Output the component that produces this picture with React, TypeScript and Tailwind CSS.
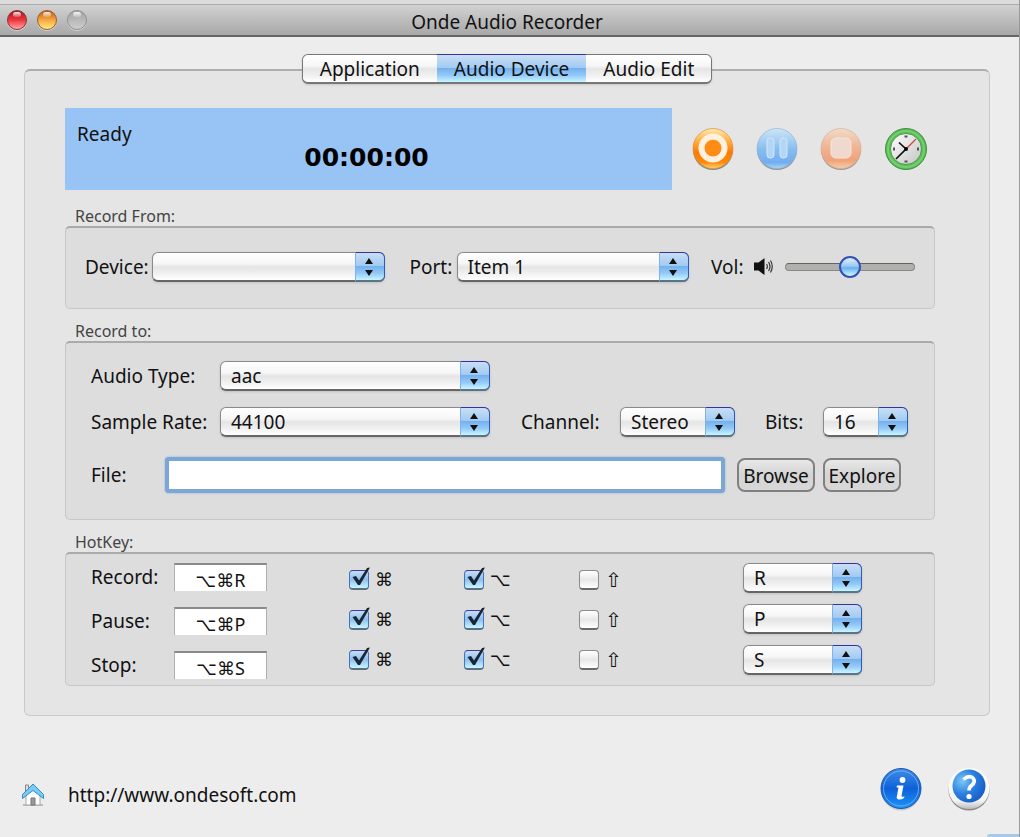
import { useState } from 'react';
import type { ReactNode } from 'react';
import clsx from 'clsx';

const AQUA =
  'bg-[linear-gradient(to_bottom,#c9def5_0%,#a3cbf3_46%,#74b1ee_50%,#93c9f8_75%,#c8f6ff_100%)]';
const GLOSS =
  'bg-[linear-gradient(to_bottom,#ffffff_0%,#f6f6f6_40%,#e5e5e5_52%,#f0f0f0_75%,#ffffff_100%)]';

const TABS = ['Application', 'Audio Device', 'Audio Edit'];

const HOTKEYS = [
  { name: 'Record', key: 'R' },
  { name: 'Pause', key: 'P' },
  { name: 'Stop', key: 'S' },
];

const MODIFIERS = [
  { name: 'Command', symbol: '⌘', on: true },
  { name: 'Option', symbol: '⌥', on: true },
  { name: 'Shift', symbol: '⇧', on: false },
];

type PopupProps = {
  id?: string;
  label?: string;
  options: string[];
  className?: string;
};

function Popup({ id, label, options, className }: PopupProps) {
  return (
    <div className={clsx('relative h-[30px]', className)}>
      <select
        id={id}
        aria-label={label}
        className={clsx(
          'h-full w-full appearance-none rounded-md border border-b-2 border-[#8a8a8a] border-b-[#666] pr-8 pl-[10px] text-[19px] leading-6 shadow-sm outline-none',
          GLOSS,
        )}
      >
        {options.map((option) => (
          <option key={option}>{option}</option>
        ))}
      </select>
      <span
        className={clsx(
          'pointer-events-none absolute inset-y-0 right-0 flex w-[30px] items-center justify-center rounded-r-md border border-b-2 border-t-[#3434a4] border-r-[#2c5cb4] border-b-[#5c7488] border-l-[#7fb2e6] pr-[2px]',
          AQUA,
        )}
      >
        <svg width="8" height="18" viewBox="0 0 8 18" aria-hidden="true">
          <path d="M4 0l4 6H0zM4 18l4-6H0z" fill="#111" />
        </svg>
      </span>
    </div>
  );
}

function Check({ label, symbol, on }: { label: string; symbol: string; on: boolean }) {
  return (
    <label className="flex h-5 items-center gap-[6px]">
      <span className="relative size-5">
        <input
          type="checkbox"
          defaultChecked={on}
          aria-label={label}
          className="peer block size-5 appearance-none rounded-sm border border-b-2 border-[#8c8c8c] border-b-[#6a6a6a] bg-[linear-gradient(to_bottom,#ffffff,#e8e8e8_50%,#ffffff)] checked:border-[#4672b8] checked:border-t-[#3c3ca8] checked:border-b-[#5a6f84] checked:bg-[linear-gradient(to_bottom,#c9def5,#8fc0f2_50%,#c8f6ff)]"
        />
        <svg
          className="pointer-events-none absolute -top-1 left-0 hidden peer-checked:block"
          width="22"
          height="22"
          viewBox="0 0 22 22"
          aria-hidden="true"
        >
          <path d="M3.500 11l3.500-1 3 4.500L18 2l3-.5L11 19H9z" fill="#1b2633" />
        </svg>
      </span>
      <span
        className={clsx(
          "font-['DejaVu_Sans',sans-serif] leading-5",
          symbol === '⇧' ? 'text-xl' : 'text-lg',
        )}
      >
        {symbol}
      </span>
    </label>
  );
}

function Group({ title, className, children }: { title: string; className?: string; children: ReactNode }) {
  return (
    <section>
      <h2 className="pl-[10px] text-base leading-5 text-[#444]">{title}</h2>
      <div
        className={clsx(
          'rounded-[5px] border border-t-2 border-[#c6c6c6] border-t-[#aaa] bg-[#ddd]',
          className,
        )}
      >
        {children}
      </div>
    </section>
  );
}

function Light({ label, className }: { label: string; className: string }) {
  return (
    <button
      aria-label={label}
      className={clsx(
        'flex size-5 justify-center rounded-full border pt-px shadow-[0_1px_0_#d8d8d8]',
        className,
      )}
    >
      <span className="h-[5px] w-2 rounded-full bg-linear-to-b from-white/90 to-white/20" />
    </button>
  );
}

function RecordIcon() {
  return (
    <svg viewBox="0 0 42 44" className="h-11 w-[42px]" aria-hidden="true">
      <defs>
        <linearGradient id="rec" x2="0" y2="1">
          <stop offset="0" stopColor="#ffe9b0" />
          <stop offset=".3" stopColor="#ffb347" />
          <stop offset=".6" stopColor="#ff7a00" />
          <stop offset=".85" stopColor="#ff8a0a" />
          <stop offset="1" stopColor="#ffd873" />
        </linearGradient>
      </defs>
      <circle cx="21" cy="23" r="20" fill="#000" opacity=".4" />
      <circle cx="21" cy="21.500" r="20" fill="url(#rec)" stroke="#d9903a" strokeWidth=".7" />
      <circle cx="21" cy="21" r="11.500" fill="none" stroke="#fff0df" strokeWidth="6" />
      <circle cx="21" cy="21" r="8" fill="#ff8c14" />
    </svg>
  );
}

function PauseIcon() {
  return (
    <svg viewBox="0 0 42 44" className="h-11 w-[42px]" aria-hidden="true">
      <defs>
        <linearGradient id="pause" x2="0" y2="1">
          <stop offset="0" stopColor="#cfe6f4" />
          <stop offset=".5" stopColor="#88bff0" />
          <stop offset=".85" stopColor="#72adf0" />
          <stop offset="1" stopColor="#a5dcf6" />
        </linearGradient>
      </defs>
      <circle cx="21" cy="23" r="20" fill="#000" opacity=".35" />
      <circle cx="21" cy="21.500" r="20" fill="url(#pause)" stroke="#92b4d4" strokeWidth=".7" />
      <rect x="11" y="11" width="7" height="20" rx="3" fill="#b4d6f6" stroke="#d3e6f8" />
      <rect x="24" y="11" width="7" height="20" rx="3" fill="#b4d6f6" stroke="#d3e6f8" />
    </svg>
  );
}

function StopIcon() {
  return (
    <svg viewBox="0 0 42 44" className="h-11 w-[42px]" aria-hidden="true">
      <defs>
        <linearGradient id="stop" x2="0" y2="1">
          <stop offset="0" stopColor="#f0dccb" />
          <stop offset=".45" stopColor="#f0b595" />
          <stop offset=".8" stopColor="#f0a27a" />
          <stop offset="1" stopColor="#f5cfa8" />
        </linearGradient>
      </defs>
      <circle cx="21" cy="23" r="20" fill="#000" opacity=".32" />
      <circle cx="21" cy="21.500" r="20" fill="url(#stop)" stroke="#d8b095" strokeWidth=".7" />
      <rect x="11" y="11" width="20" height="20" rx="5" fill="#efd8ce" stroke="#f6e6dd" />
    </svg>
  );
}

function ClockIcon() {
  return (
    <svg viewBox="0 0 44 44" className="size-11" aria-hidden="true">
      <defs>
        <linearGradient id="dial" x2="1" y2="1">
          <stop offset="0" stopColor="#fff" />
          <stop offset="1" stopColor="#c4c4c4" />
        </linearGradient>
      </defs>
      <circle cx="22" cy="22" r="20.500" fill="#5cb858" stroke="#3c9440" />
      <circle cx="22" cy="22" r="18" fill="none" stroke="#74cf6c" strokeWidth="2" />
      <circle cx="22" cy="22" r="15.500" fill="url(#dial)" stroke="#4b9d4b" />
      <path d="M20.500 9.500h3M20.500 34.500h3M10 20.500v3M34 20.500v3" stroke="#555" strokeWidth="2" />
      <path d="M22 22L32 12" stroke="#cc4444" strokeWidth="1.300" />
      <path d="M15 15.500L22 22 12 32" fill="none" stroke="#111" strokeWidth="1.700" />
      <circle cx="22" cy="22" r="2" fill="#000" />
    </svg>
  );
}

function SpeakerIcon() {
  return (
    <svg width="20" height="18" viewBox="0 0 20 18" aria-hidden="true">
      <path d="M0 4.500h4.500l6-4.500v17l-6-4.500H0z" fill="#111" />
      <path
        d="M12.500 6q1.800 2.500 0 5M14.500 4q3 4.500 0 9M16.500 2.500q3.500 6 0 12"
        fill="none"
        stroke="#333"
        strokeWidth="1.200"
      />
    </svg>
  );
}

function HomeIcon() {
  return (
    <svg width="24" height="24" viewBox="0 0 24 24" aria-hidden="true">
      <path d="M2 22h20" stroke="#aaa" strokeWidth="1.500" />
      <path d="M4.500 2h3v7h-3z" fill="#ddd" stroke="#888" />
      <path d="M5 11l7-7 7 7v11H5z" fill="#fff" stroke="#aaa" />
      <path d="M10 15h4v7h-4z" fill="#999" stroke="#777" />
      <path d="M12 1L22.500 11.500v4L12 7.500 1.500 15.500v-4z" fill="#79cbf5" stroke="#338cc0" />
    </svg>
  );
}

function InfoIcon() {
  return (
    <svg width="42" height="44" viewBox="0 0 42 44" aria-hidden="true">
      <defs>
        <linearGradient id="info" x2="0" y2="1">
          <stop offset="0" stopColor="#3f8ee8" />
          <stop offset=".5" stopColor="#0f60d8" />
          <stop offset="1" stopColor="#1b94fa" />
        </linearGradient>
      </defs>
      <ellipse cx="21" cy="23" rx="20" ry="20.500" fill="#000" opacity=".15" />
      <circle cx="21" cy="21.500" r="20" fill="url(#info)" stroke="#1a58b0" />
      <circle cx="21" cy="21.500" r="17.500" fill="none" stroke="#7db9f5" strokeWidth=".8" />
      <circle cx="22.500" cy="13" r="2.900" fill="#fff" />
      <path d="M17 18.500h6.500l-2 10.500q0 1.500 3 .3l-.5 1.700q-3 2-5.500 1.500-2.500-.5-1.500-4l1.500-8H16.500z" fill="#fff" />
    </svg>
  );
}

function HelpIcon() {
  return (
    <svg width="42" height="44" viewBox="0 0 42 44" aria-hidden="true">
      <defs>
        <radialGradient id="help" cx=".3" cy=".35" r=".8">
          <stop offset="0" stopColor="#7cc8f4" />
          <stop offset=".5" stopColor="#2a7fe0" />
          <stop offset="1" stopColor="#1455c4" />
        </radialGradient>
        <linearGradient id="rim" x2="0" y2="1">
          <stop offset="0" stopColor="#fff" />
          <stop offset=".8" stopColor="#f4f4f4" />
          <stop offset="1" stopColor="#bbb" />
        </linearGradient>
      </defs>
      <circle cx="21" cy="23" r="20.500" fill="#888" />
      <circle cx="21" cy="21.500" r="20.500" fill="url(#rim)" />
      <circle cx="21" cy="19" r="16.500" fill="url(#help)" />
      <path d="M15.500 12.500q5.500-5 9.500-1.500 3 4-1.500 7.500-2.500 2-2.500 5" fill="none" stroke="#fff" strokeWidth="3.600" />
      <circle cx="21" cy="29.500" r="2.600" fill="#fff" />
    </svg>
  );
}

export default function App() {
  const [tab, setTab] = useState('Audio Device');

  return (
    <div className="relative flex min-h-screen flex-col border-r border-r-[#999] bg-[#ededed] font-['Noto_Sans',sans-serif] text-[19px] leading-6 text-[#111]">
      <div className="h-[5px] border-b border-[#aaa] bg-[#dcdcdc]" />
      <header className="flex h-8 items-center border-b-2 border-[#666] bg-linear-to-b from-[#d2d2d2] to-[#a8a8a8] pr-3 pl-[7px]">
        <div className="flex flex-1 gap-[10px]">
          <Light
            label="Close"
            className="border-[#8c3034] bg-[linear-gradient(to_bottom,#a01820,#f0343c_50%,#ffa8a8)]"
          />
          <Light
            label="Minimize"
            className="border-[#a05a28] bg-[linear-gradient(to_bottom,#c05818,#f4a840_50%,#ffec80)]"
          />
          <Light
            label="Zoom"
            className="border-[#909090] bg-[linear-gradient(to_bottom,#a4a4a4,#b8b8b8_50%,#cfcfcf)]"
          />
        </div>
        <h1 className="pt-[3px]">Onde Audio Recorder</h1>
        <div className="flex-1" />
      </header>

      <main className="mt-8 mr-[29px] ml-6 rounded-md border border-t-2 border-[#c9c9c9] border-t-[#aeaeae] bg-[#e5e5e5] pr-[54px] pb-[29px] pl-10">
        <nav className="-mt-[17px] mr-[-14px] flex justify-center">
          <div className="flex h-[30px] rounded-md border border-b-2 border-[#777] bg-white shadow-sm">
            {TABS.map((name) => (
              <button
                key={name}
                onClick={() => setTab(name)}
                className={clsx(
                  'px-[17px] first:rounded-l-md last:rounded-r-md',
                  name === tab ? clsx(AQUA, '-mt-px border-t border-[#3434a4]') : GLOSS,
                )}
              >
                {name}
              </button>
            ))}
          </div>
        </nav>

        <div className="mt-6 flex items-center gap-5">
          <div className="h-[82px] flex-1 bg-[#98c3f5] pt-[14px] pl-3">
            <p>Ready</p>
            <p className="pr-4 text-center font-['DejaVu_Sans',sans-serif] text-[25px] leading-6 font-bold text-black">
              00:00:00
            </p>
          </div>
          <div className="mr-[7px] flex gap-[22px]">
            <button aria-label="Record">
              <RecordIcon />
            </button>
            <button aria-label="Pause">
              <PauseIcon />
            </button>
            <button aria-label="Stop">
              <StopIcon />
            </button>
            <button aria-label="Schedule">
              <ClockIcon />
            </button>
          </div>
        </div>

        <div className="mt-4 flex flex-col gap-3">
          <Group title="Record From:" className="flex h-[83px] items-center px-[19px] pb-[2px]">
            <label htmlFor="device" className="w-[67px]">
              Device:
            </label>
            <Popup id="device" options={['']} className="flex-1" />
            <label htmlFor="port" className="ml-[25px] w-[47px]">
              Port:
            </label>
            <Popup id="port" options={['Item 1']} className="flex-1" />
            <label htmlFor="volume" className="ml-[22px] w-[43px]">
              Vol:
            </label>
            <SpeakerIcon />
            <input
              id="volume"
              type="range"
              defaultValue="50"
              className="ml-[11px] h-6 w-[130px] appearance-none bg-transparent [&::-webkit-slider-runnable-track]:h-2 [&::-webkit-slider-runnable-track]:rounded-full [&::-webkit-slider-runnable-track]:border [&::-webkit-slider-runnable-track]:border-[#8c8784] [&::-webkit-slider-runnable-track]:border-t-[#66625f] [&::-webkit-slider-runnable-track]:bg-[#b0b0ae] [&::-webkit-slider-thumb]:-mt-2 [&::-webkit-slider-thumb]:size-[22px] [&::-webkit-slider-thumb]:appearance-none [&::-webkit-slider-thumb]:rounded-full [&::-webkit-slider-thumb]:border-2 [&::-webkit-slider-thumb]:border-[#3450b8] [&::-webkit-slider-thumb]:bg-[linear-gradient(to_bottom,#e0f0ff,#9cc8f4_45%,#68b0f0_55%,#d0fbff)]"
            />
          </Group>

          <Group title="Record to:" className="flex flex-col gap-4 pt-[18px] pr-[26px] pb-[26px] pl-[25px]">
            <div className="flex items-center">
              <label htmlFor="type" className="w-[129px]">
                Audio Type:
              </label>
              <Popup id="type" options={['aac', 'mp3', 'wav']} className="w-[270px]" />
            </div>
            <div className="flex items-center">
              <label htmlFor="rate" className="w-[129px]">
                Sample Rate:
              </label>
              <Popup id="rate" options={['44100', '48000']} className="w-[270px]" />
              <label htmlFor="channel" className="ml-[31px] w-[99px]">
                Channel:
              </label>
              <Popup id="channel" options={['Stereo', 'Mono']} className="w-[115px]" />
              <label htmlFor="bits" className="ml-[30px] w-[58px]">
                Bits:
              </label>
              <Popup id="bits" options={['16', '24']} className="w-[85px]" />
            </div>
            <div className="mt-1 mr-[7px] flex items-center">
              <label htmlFor="file" className="w-[74px]">
                File:
              </label>
              <input
                id="file"
                type="text"
                className="h-9 min-w-0 flex-1 rounded-sm border-4 border-[#7ba6d6] bg-white px-2 shadow-[0_0_2px_#7ba6d6] outline-none"
              />
              <div className="ml-3 flex gap-2">
                {['Browse', 'Explore'].map((name) => (
                  <button
                    key={name}
                    className="h-[34px] w-[78px] rounded-lg border-2 border-[#808080] bg-linear-to-b from-[#e8e8e8] via-[#d4d4d4] to-[#d8d8d8] pt-[2px]"
                  >
                    {name}
                  </button>
                ))}
              </div>
            </div>
          </Group>

          <Group title="HotKey:" className="flex h-[134px] pt-[9px] pr-[72px] pl-[25px]">
            <div className="flex flex-col gap-4">
              {HOTKEYS.map(({ name, key }) => (
                <div key={name} className="flex h-7 items-center">
                  <label htmlFor={name} className="w-[83px]">
                    {name}:
                  </label>
                  <input
                    id={name}
                    readOnly
                    value={`⌥⌘${key}`}
                    className="h-7 w-[93px] border-t-2 border-r border-l border-[#b0b0b0] border-t-[#8a8a8a] bg-white pt-1 text-center font-['Noto_Sans','DejaVu_Sans',sans-serif] text-lg leading-6 outline-none"
                  />
                </div>
              ))}
            </div>
            <div className="ml-[82px] flex gap-[70px] pt-[7px]">
              {MODIFIERS.map((mod) => (
                <div key={mod.name} className="flex w-[45px] flex-col gap-5">
                  {HOTKEYS.map(({ name }) => (
                    <Check key={name} label={`${name} ${mod.name}`} symbol={mod.symbol} on={mod.on} />
                  ))}
                </div>
              ))}
            </div>
            <div className="ml-auto flex w-[119px] flex-col gap-[11px]">
              {HOTKEYS.map(({ name, key }) => (
                <Popup key={name} label={`${name} key`} options={[key]} />
              ))}
            </div>
          </Group>
        </div>
      </main>

      <footer className="mt-[51px] flex items-center pr-[29px] pl-[21px]">
        <a href="http://www.ondesoft.com" className="flex items-center gap-[23px] pt-3">
          <HomeIcon />
          http://www.ondesoft.com
        </a>
        <button aria-label="Info" className="ml-auto">
          <InfoIcon />
        </button>
        <button aria-label="Help" className="ml-[26px]">
          <HelpIcon />
        </button>
      </footer>
      <div className="absolute right-0 bottom-0 h-[3px] w-8 rounded-tl-sm bg-[#a9c9ea]" />
    </div>
  );
}
